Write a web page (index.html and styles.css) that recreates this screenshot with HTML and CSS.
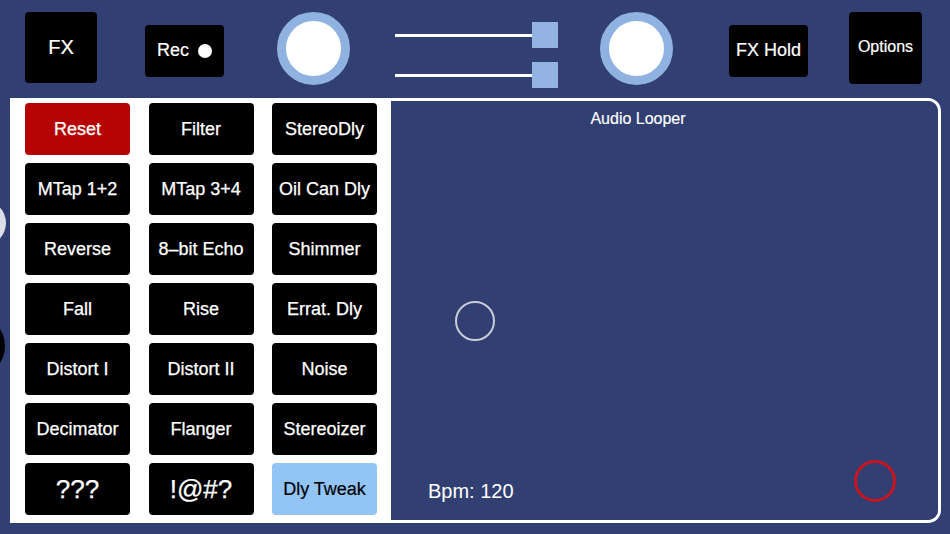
FILE: index.html
```html
<!DOCTYPE html>
<html>
<head>
<meta charset="utf-8">
<link rel="stylesheet" href="styles.css">
</head>
<body>
<div class="app">
  <div class="edge-knob edge-gray"></div>
  <div class="edge-knob edge-black"></div>
  <header class="topbar">
    <div class="tbtn tbtn-fx">FX</div>
    <div class="tbtn tbtn-rec">Rec <span class="dot"></span></div>
    <div class="knob knob-1"></div>
    <div class="sliders">
      <div class="slider"><span class="track"></span><span class="thumb"></span></div>
      <div class="slider"><span class="track"></span><span class="thumb"></span></div>
    </div>
    <div class="knob knob-2"></div>
    <div class="tbtn tbtn-hold">FX Hold</div>
    <div class="tbtn tbtn-options">Options</div>
  </header>
  <main class="stage">
    <section class="fx-panel">
      <div class="fx-btn fx-red">Reset</div>
      <div class="fx-btn">Filter</div>
      <div class="fx-btn">StereoDly</div>
      <div class="fx-btn">MTap 1+2</div>
      <div class="fx-btn">MTap 3+4</div>
      <div class="fx-btn">Oil Can Dly</div>
      <div class="fx-btn">Reverse</div>
      <div class="fx-btn">8‒bit Echo</div>
      <div class="fx-btn">Shimmer</div>
      <div class="fx-btn">Fall</div>
      <div class="fx-btn">Rise</div>
      <div class="fx-btn">Errat. Dly</div>
      <div class="fx-btn">Distort I</div>
      <div class="fx-btn">Distort II</div>
      <div class="fx-btn">Noise</div>
      <div class="fx-btn">Decimator</div>
      <div class="fx-btn">Flanger</div>
      <div class="fx-btn">Stereoizer</div>
      <div class="fx-btn fx-big">???</div>
      <div class="fx-btn fx-big">!@#?</div>
      <div class="fx-btn fx-light">Dly Tweak</div>
    </section>
    <section class="looper">
      <div class="looper-title">Audio Looper</div>
      <div class="pad-ring pad-gray"></div>
      <div class="pad-ring pad-red"></div>
      <div class="bpm">Bpm: 120</div>
    </section>
  </main>
</div>
</body>
</html>
```

FILE: styles.css
```css
html, body {
  margin: 0;
  padding: 0;
}
body {
  background: #323f73;
  font-family: "Liberation Sans", Arial, sans-serif;
  color: #ffffff;
  width: 950px;
  height: 534px;
  overflow: hidden;
}
.app {
  position: relative;
  width: 950px;
  height: 534px;
}
.edge-knob {
  position: absolute;
  border-radius: 50%;
}
.edge-gray {
  left: -40px;
  top: 200px;
  width: 46px;
  height: 46px;
  background: #dcdfe8;
}
.edge-black {
  left: -52px;
  top: 316px;
  width: 57px;
  height: 60px;
  background: #000000;
}

/* ---------- top bar ---------- */
.topbar {
  height: 98px;
  display: flex;
  align-items: center;
  padding-left: 25px;
  box-sizing: border-box;
}
.tbtn {
  background: #000;
  border-radius: 4px;
  display: flex;
  align-items: center;
  justify-content: center;
  color: #fff;
  -webkit-text-stroke: 0.2px #ffffff;
}
.tbtn-fx {
  width: 72px;
  height: 71px;
  font-size: 20px;
  margin-top: -3px;
}
.tbtn-rec {
  width: 79px;
  height: 52px;
  margin-left: 48px;
  margin-top: 3px;
  font-size: 18px;
  gap: 9px;
}
.dot {
  width: 14px;
  height: 14px;
  border-radius: 50%;
  background: #fff;
}
.knob {
  width: 73px;
  height: 73px;
  box-sizing: border-box;
  border-radius: 50%;
  background: #ffffff;
  border: 9.5px solid #90b2e0;
  margin-top: -2px;
}
.knob-1 {
  margin-left: 53px;
}
.knob-2 {
  margin-left: 42px;
}
.sliders {
  margin-left: 45px;
  display: flex;
  flex-direction: column;
  gap: 14px;
  margin-top: 12px;
}
.slider {
  display: flex;
  align-items: center;
}
.track {
  width: 137px;
  height: 3px;
  background: #ffffff;
}
.thumb {
  width: 26px;
  height: 26px;
  background: #93b4e2;
}
.tbtn-hold {
  width: 79px;
  height: 52px;
  margin-left: 56px;
  margin-top: 3px;
  font-size: 18px;
}
.tbtn-options {
  width: 73px;
  height: 72px;
  margin-left: 41px;
  margin-top: -3px;
  font-size: 16px;
  padding-bottom: 2px;
  box-sizing: border-box;
}

/* ---------- stage ---------- */
.stage {
  margin-left: 10px;
  width: 931px;
  height: 425px;
  box-sizing: border-box;
  border: 3px solid #ffffff;
  border-radius: 0 13px 13px 0;
  display: flex;
  overflow: hidden;
}
.fx-panel {
  width: 378px;
  background: #ffffff;
  box-sizing: border-box;
  padding: 2px 0 0 12px;
  display: grid;
  grid-template-columns: 105px 105px 105px;
  grid-auto-rows: 52px;
  column-gap: 18.5px;
  row-gap: 8px;
  align-content: start;
}
.fx-btn {
  background: #000000;
  color: #ffffff;
  border-radius: 4px;
  display: flex;
  align-items: center;
  justify-content: center;
  font-size: 18px;
  white-space: nowrap;
  -webkit-text-stroke: 0.25px #ffffff;
}
.fx-red {
  background: #b50303;
}
.fx-light {
  background: #92c4f6;
  color: #000000;
  font-size: 18px;
  -webkit-text-stroke: 0.2px #000000;
}
.fx-big {
  font-size: 26px;
}
.looper {
  flex: 1;
  position: relative;
  background: #323f73;
  display: flex;
  flex-direction: column;
  padding: 9px 0 17px 37px;
  box-sizing: border-box;
}
.looper-title {
  font-size: 16px;
  text-align: center;
  padding-right: 90px;
  -webkit-text-stroke: 0.15px #ffffff;
}
.bpm {
  margin-top: auto;
  font-size: 20px;
}
.pad-ring {
  position: absolute;
  border-radius: 50%;
  box-sizing: border-box;
}
.pad-gray {
  left: 64px;
  top: 200px;
  width: 40px;
  height: 40px;
  border: 2.5px solid #c9cbd6;
}
.pad-red {
  left: 463px;
  top: 359px;
  width: 42px;
  height: 42px;
  border: 3px solid #c8141f;
}
```
